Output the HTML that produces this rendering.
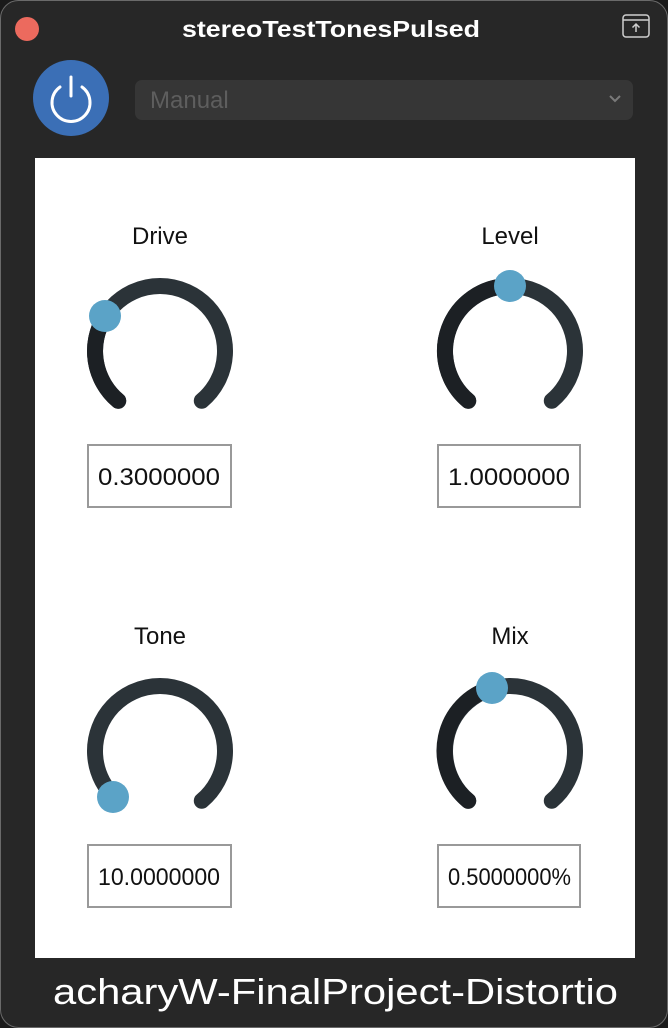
<!DOCTYPE html>
<html><head><meta charset="utf-8"><style>
html,body{margin:0;padding:0;background:#1a1a1a;width:668px;height:1028px;overflow:hidden}
svg{display:block}
</style></head><body>
<svg width="668" height="1028" viewBox="0 0 668 1028" xmlns="http://www.w3.org/2000/svg" font-family="Liberation Sans, sans-serif">
<rect x="0.5" y="0.5" width="667" height="1027" rx="18" fill="#272727" stroke="#6a6a6a"/>
<circle cx="27" cy="29" r="12" fill="#ec6a5e"/>
<text x="182" y="37" fill="#fff" font-size="23" font-weight="bold" textLength="298" lengthAdjust="spacingAndGlyphs">stereoTestTonesPulsed</text>
<rect x="623" y="15" width="26" height="22" rx="3" fill="none" stroke="#cfcfcf" stroke-width="1.5"/>
<line x1="623" y1="20" x2="649" y2="20" stroke="#cfcfcf" stroke-width="1.5"/>
<path d="M636 32 V24 M632.5 27.5 L636 24 L639.5 27.5" fill="none" stroke="#cfcfcf" stroke-width="1.5"/>
<ellipse cx="71" cy="98" rx="38" ry="38" fill="#3b6fb6"/>
<path d="M60 87 A19 19 0 1 0 82 87" fill="none" stroke="#fff" stroke-width="3" stroke-linecap="round"/>
<line x1="71" y1="77" x2="71" y2="96" stroke="#fff" stroke-width="3" stroke-linecap="round"/>
<rect x="135" y="80" width="498" height="40" rx="7" fill="#363636"/>
<text x="150" y="108" fill="#5e5e5e" font-size="24">Manual</text>
<path d="M610 96 L615 101 L620 96" fill="none" stroke="#7a7a7a" stroke-width="2"/>
<rect x="35" y="158" width="600" height="800" fill="#fff"/>
<g font-size="24" fill="#111" text-anchor="middle">
<text x="160" y="244">Drive</text><text x="510" y="244">Level</text>
<text x="160" y="644">Tone</text><text x="510" y="644">Mix</text>
</g>
<g fill="none" stroke-width="16" stroke-linecap="round">
<path d="M118.2 400.8 A65 65 0 1 1 201.8 400.8" stroke="#2b3338"/>
<path d="M118.2 400.8 A65 65 0 0 1 104.9 316.6" stroke="#1c2024"/>
<path d="M468.2 400.8 A65 65 0 1 1 551.8 400.8" stroke="#2b3338"/>
<path d="M468.2 400.8 A65 65 0 0 1 510 286" stroke="#1c2024"/>
<path d="M118.2 800.8 A65 65 0 1 1 201.8 800.8" stroke="#2b3338"/>
<path d="M468.2 800.8 A65 65 0 1 1 551.8 800.8" stroke="#2b3338"/>
<path d="M468.2 800.8 A65 65 0 0 1 492 688" stroke="#1c2024"/>
</g>
<g fill="#5ba3c7">
<circle cx="105" cy="316" r="16"/><circle cx="510" cy="286" r="16"/>
<circle cx="113" cy="797" r="16"/><circle cx="492" cy="688" r="16"/>
</g>
<g fill="#fff" stroke="#999" stroke-width="2">
<rect x="88" y="445" width="143" height="62"/><rect x="438" y="445" width="142" height="62"/>
<rect x="88" y="845" width="143" height="62"/><rect x="438" y="845" width="142" height="62"/>
</g>
<g font-size="24" fill="#111">
<text x="98" y="485" textLength="122" lengthAdjust="spacingAndGlyphs">0.3000000</text>
<text x="448" y="485" textLength="122" lengthAdjust="spacingAndGlyphs">1.0000000</text>
<text x="98" y="885" textLength="122" lengthAdjust="spacingAndGlyphs">10.0000000</text>
<text x="448" y="885" textLength="123" lengthAdjust="spacingAndGlyphs">0.5000000%</text>
</g>
<text x="53" y="1004" fill="#fff" font-size="36" textLength="565" lengthAdjust="spacingAndGlyphs">acharyW-FinalProject-Distortio</text>
</svg>
</body></html>
